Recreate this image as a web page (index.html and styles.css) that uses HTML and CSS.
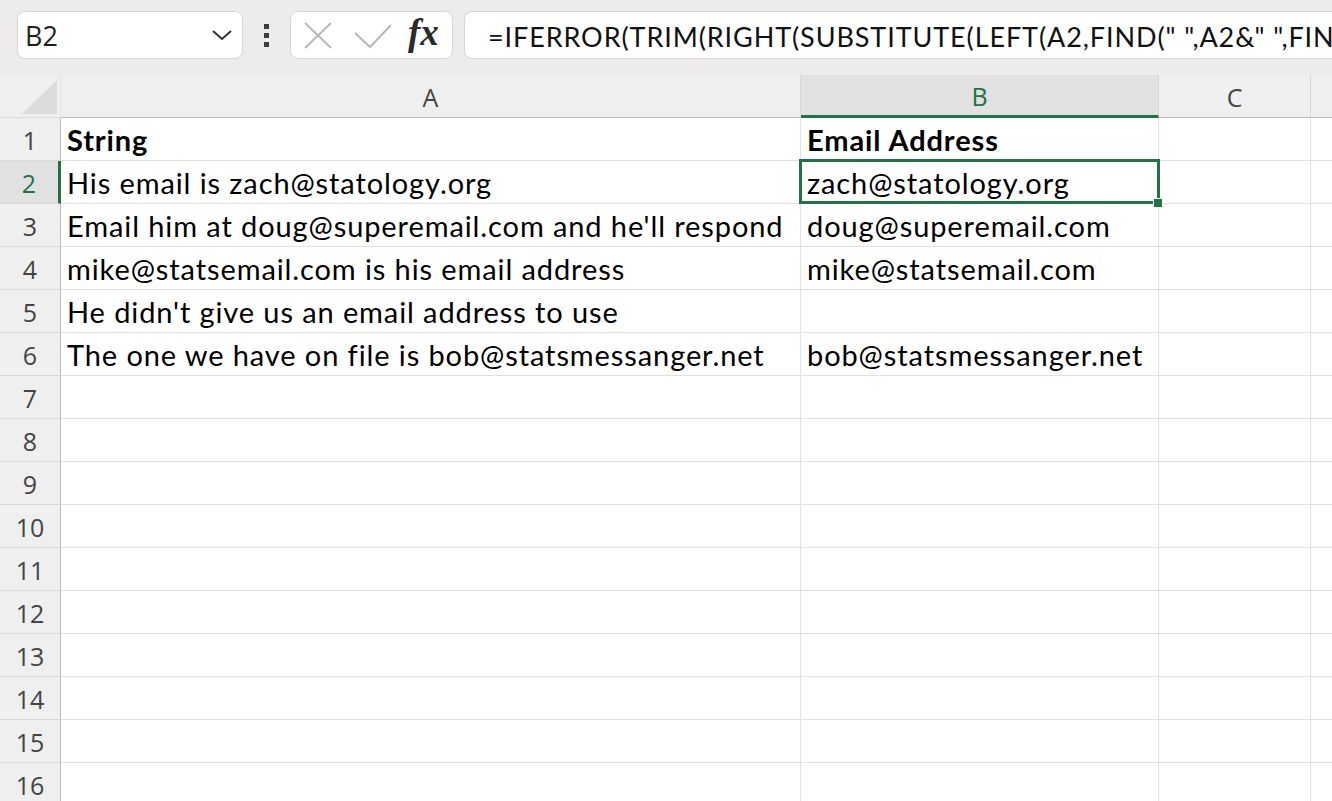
FILE: index.html
```html
<!DOCTYPE html>
<html lang="en">
<head>
    <meta charset="UTF-8">
    <title>Sheet1 - Excel</title>
    <link rel="stylesheet" href="styles.css">
</head>
<body>
    <div class="toolbar">
        <div class="namebox">
            <span class="cellref">B2</span>
            <svg class="chevron" width="22" height="14" viewBox="0 0 22 14">
                <polyline points="2,3 11,11 20,3" fill="none" stroke="#333" stroke-width="2"/>
            </svg>
        </div>
        <div class="dots"><i></i><i></i><i></i></div>
        <div class="fxbox">
            <svg class="icon-x" width="30" height="28" viewBox="0 0 30 28">
                <line x1="2" y1="1" x2="28" y2="26" stroke="#b9b9b9" stroke-width="2"/>
                <line x1="28" y1="1" x2="2" y2="26" stroke="#b9b9b9" stroke-width="2"/>
            </svg>
            <svg class="icon-check" width="38" height="26" viewBox="0 0 38 26">
                <polyline points="1,10 16,24 37,2" fill="none" stroke="#b9b9b9" stroke-width="2"/>
            </svg>
            <span class="fx">fx</span>
        </div>
        <div class="formula">=IFERROR(TRIM(RIGHT(SUBSTITUTE(LEFT(A2,FIND(" ",A2&amp;" ",FIND("@",A2))-1)," ",REPT(" ",LEN(A2))),LEN(A2))),"")</div>
    </div>

    <div class="sheet">
        <div class="corner"><span class="tri"></span></div>
        <div class="colhead">A</div>
        <div class="colhead active">B</div>
        <div class="colhead">C</div>
        <div class="colhead last"></div>

        <div class="rowhead">1</div>
        <div class="cell bold">String</div>
        <div class="cell bold">Email Address</div>
        <div class="cell"></div>
        <div class="cell last"></div>

        <div class="rowhead active">2</div>
        <div class="cell">His email is zach@statology.org</div>
        <div class="cell selected">zach@statology.org<span class="handle"></span></div>
        <div class="cell"></div>
        <div class="cell last"></div>

        <div class="rowhead">3</div>
        <div class="cell">Email him at doug@superemail.com and he'll respond</div>
        <div class="cell">doug@superemail.com</div>
        <div class="cell"></div>
        <div class="cell last"></div>

        <div class="rowhead">4</div>
        <div class="cell">mike@statsemail.com is his email address</div>
        <div class="cell">mike@statsemail.com</div>
        <div class="cell"></div>
        <div class="cell last"></div>

        <div class="rowhead">5</div>
        <div class="cell">He didn't give us an email address to use</div>
        <div class="cell"></div>
        <div class="cell"></div>
        <div class="cell last"></div>

        <div class="rowhead">6</div>
        <div class="cell">The one we have on file is bob@statsmessanger.net</div>
        <div class="cell">bob@statsmessanger.net</div>
        <div class="cell"></div>
        <div class="cell last"></div>

        <div class="rowhead">7</div><div class="cell"></div><div class="cell"></div><div class="cell"></div><div class="cell last"></div>
        <div class="rowhead">8</div><div class="cell"></div><div class="cell"></div><div class="cell"></div><div class="cell last"></div>
        <div class="rowhead">9</div><div class="cell"></div><div class="cell"></div><div class="cell"></div><div class="cell last"></div>
        <div class="rowhead">10</div><div class="cell"></div><div class="cell"></div><div class="cell"></div><div class="cell last"></div>
        <div class="rowhead">11</div><div class="cell"></div><div class="cell"></div><div class="cell"></div><div class="cell last"></div>
        <div class="rowhead">12</div><div class="cell"></div><div class="cell"></div><div class="cell"></div><div class="cell last"></div>
        <div class="rowhead">13</div><div class="cell"></div><div class="cell"></div><div class="cell"></div><div class="cell last"></div>
        <div class="rowhead">14</div><div class="cell"></div><div class="cell"></div><div class="cell"></div><div class="cell last"></div>
        <div class="rowhead">15</div><div class="cell"></div><div class="cell"></div><div class="cell"></div><div class="cell last"></div>
        <div class="rowhead">16</div><div class="cell"></div><div class="cell"></div><div class="cell"></div><div class="cell last"></div>
    </div>
</body>
</html>
```

FILE: styles.css
```css
body {
    margin: 0;
    width: 1332px;
    height: 801px;
    overflow: hidden;
    background-color: #ffffff;
    font-family: Lato, "Liberation Sans", sans-serif;
}

/* formula bar */
.toolbar {
    height: 75px;
    box-sizing: border-box;
    padding: 11px 0 0 17px;
    background-color: #eeecea;
    display: flex;
    align-items: flex-start;
    white-space: nowrap;
    overflow: hidden;
}

.namebox {
    width: 226px;
    height: 48px;
    flex-shrink: 0;
    box-sizing: border-box;
    background-color: #ffffff;
    border: 1px solid #d8d6d4;
    border-radius: 8px;
    display: flex;
    align-items: center;
    justify-content: space-between;
    padding: 0 9px 0 7px;
}

.cellref {
    font-family: "Open Sans", "Noto Sans", sans-serif;
    font-size: 27px;
    color: #1f1f1f;
}

.dots {
    width: 5px;
    flex-shrink: 0;
    margin: 13px 21px 0 21px;
    display: flex;
    flex-direction: column;
    gap: 4px;
}

.dots i {
    display: block;
    width: 5px;
    height: 5px;
    background-color: #3c3c3c;
}

.fxbox {
    width: 163px;
    height: 48px;
    flex-shrink: 0;
    box-sizing: border-box;
    background-color: #ffffff;
    border: 1px solid #d8d6d4;
    border-radius: 8px;
    display: flex;
    align-items: center;
    padding-left: 12px;
}

.icon-x {
    margin-top: 1px;
}

.icon-check {
    margin-left: 21px;
    margin-top: 1px;
}

.fx {
    margin-left: 16px;
    font-family: "Liberation Serif", serif;
    font-style: italic;
    font-weight: 700;
    font-size: 37px;
    color: #2b2b2b;
    line-height: 40px;
    margin-top: -4px;
}

.formula {
    flex-shrink: 0;
    margin-left: 11px;
    height: 48px;
    box-sizing: border-box;
    background-color: #ffffff;
    border: 1px solid #d8d6d4;
    border-right: none;
    border-radius: 8px 0 0 8px;
    padding: 2px 0 0 23px;
    font-size: 27px;
    letter-spacing: 0.9px;
    line-height: 46px;
    color: #111111;
}

/* grid */
.sheet {
    display: grid;
    grid-template-columns: 61px 740px 358px 152px 1fr;
    grid-auto-rows: 43px;
}

.corner,
.colhead,
.rowhead,
.cell {
    box-sizing: border-box;
    border-right: 1px solid #e1e1e1;
    border-bottom: 1px solid #e1e1e1;
}

.corner {
    background-color: #efefef;
    border-bottom-color: #d9d9d9;
    border-right-color: #e4e4e4;
    position: relative;
}

.tri {
    position: absolute;
    left: 22px;
    top: 5px;
    width: 35px;
    height: 34px;
    background-color: #dcdcdc;
    clip-path: polygon(100% 0, 100% 100%, 0 100%);
}

.colhead {
    background-color: #efefef;
    border-right-color: #d6d6d6;
    border-bottom-color: #bdbdbd;
    text-align: center;
    font-family: "Open Sans", "Noto Sans", sans-serif;
    font-size: 25px;
    line-height: 44px;
    color: #444444;
}

.colhead.active {
    background-color: #e1e1e1;
    color: #217346;
    border-bottom: 3px solid #217346;
    line-height: 42px;
}

.colhead.last {
    border-right: none;
}

.rowhead {
    background-color: #efefef;
    border-right-color: #bdbdbd;
    border-bottom-color: #dadada;
    text-align: center;
    font-family: "Open Sans", "Noto Sans", sans-serif;
    font-size: 25px;
    line-height: 44px;
    color: #444444;
}

.rowhead.active {
    background-color: #e1e1e1;
    color: #217346;
    border-right: 3px solid #217346;
}

.cell {
    padding: 3px 0 0 6px;
    font-size: 29px;
    letter-spacing: 0.9px;
    line-height: 38px;
    color: #000000;
    white-space: nowrap;
}

.cell.bold {
    font-weight: 700;
}

.cell.last {
    border-right: none;
}

.cell.selected {
    position: relative;
}

.cell.selected::after {
    content: "";
    position: absolute;
    left: -2px;
    top: -2px;
    right: -2px;
    bottom: -1px;
    border: 3px solid #217346;
}

.handle {
    position: absolute;
    right: -5px;
    bottom: -5px;
    width: 8px;
    height: 8px;
    background-color: #217346;
    border: 1px solid #ffffff;
    z-index: 1;
}
```
